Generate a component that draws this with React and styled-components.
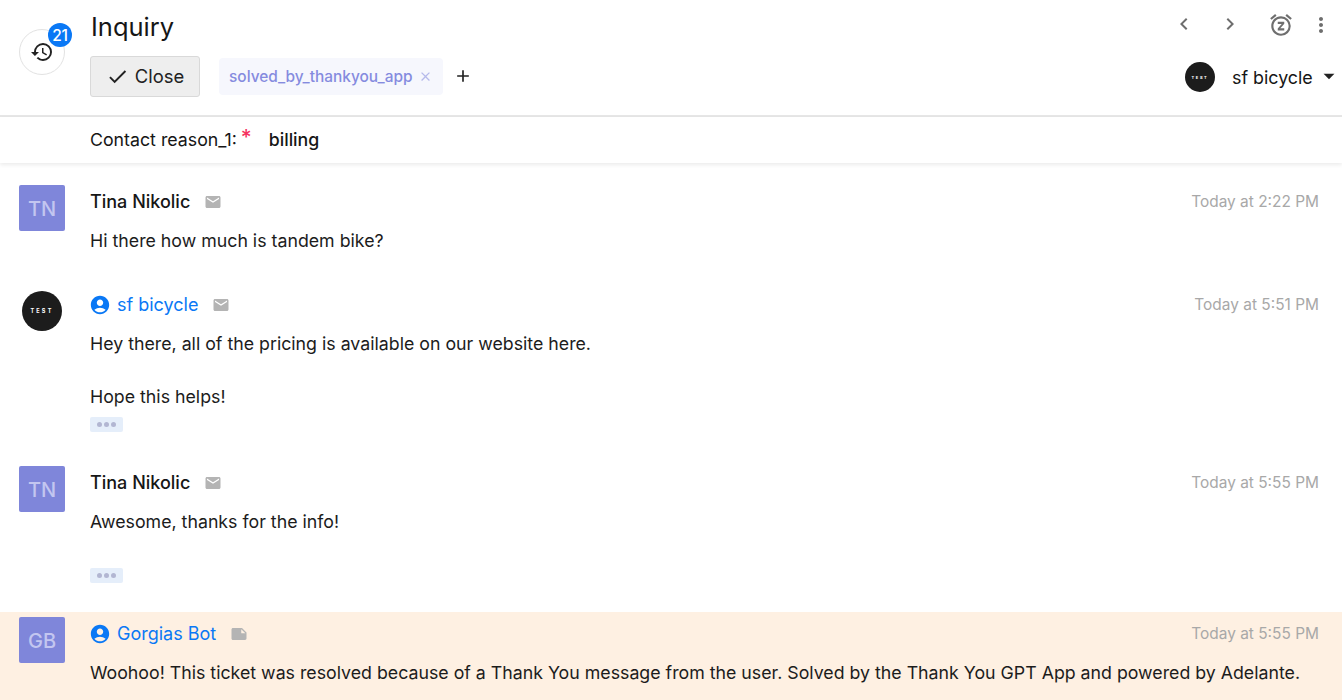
import React from 'react'
import styled, { createGlobalStyle } from 'styled-components'
import {
  MdHistory,
  MdCheck,
  MdClose,
  MdAdd,
  MdChevronLeft,
  MdChevronRight,
  MdSnooze,
  MdMoreVert,
  MdArrowDropDown,
  MdAccountCircle,
  MdEmail,
  MdNote,
} from 'react-icons/md'

const GlobalStyle = createGlobalStyle`
  html, body {
    margin: 0;
    height: 100%;
    overflow: hidden;
    background: #fff;
    font-family: Inter, "Liberation Sans", sans-serif;
    color: #161616;
  }
  * { box-sizing: border-box; }
`

const Header = styled.header`
  height: 117px;
  display: flex;
  padding: 0 0 0 19px;
  border-bottom: 2px solid #e6e6e6;
`

const HistoryCol = styled.div`
  width: 71px;
  flex: none;
  padding-top: 29px;
`

const HistoryBtn = styled.div`
  position: relative;
  width: 46px;
  height: 46px;
  border: 1px solid #e2e2e2;
  border-radius: 50%;
  display: flex;
  align-items: center;
  justify-content: center;
  font-size: 24px;
  color: #222;
`

const Badge = styled.span`
  position: absolute;
  top: -7px;
  right: -8px;
  width: 24px;
  height: 24px;
  border-radius: 50%;
  background: #0a78f5;
  color: #fff;
  font-size: 15.5px;
  font-weight: 500;
  letter-spacing: -0.3px;
  display: flex;
  align-items: center;
  justify-content: center;
`

const HeadMain = styled.div`
  flex: 1;
  min-width: 0;
`

const Title = styled.h1`
  margin: 0;
  padding: 11px 0 0 1px;
  height: 55px;
  font-size: 25.5px;
  line-height: 32px;
  font-weight: 400;
  color: #161616;
`

const ActionRow = styled.div`
  display: flex;
  align-items: center;
  height: 42px;
`

const CloseBtn = styled.button`
  width: 110px;
  height: 41px;
  margin: 0 19px 0 0;
  padding: 0;
  display: flex;
  align-items: center;
  justify-content: center;
  gap: 6px;
  background: #eeeeee;
  border: 1px solid #d9d9d9;
  border-radius: 3px;
  font: 400 18.4px Inter, "Liberation Sans", sans-serif;
  color: #222;
  svg { font-size: 23px; }
`

const Tag = styled.span`
  height: 37px;
  padding: 0 10px;
  display: flex;
  align-items: center;
  gap: 5px;
  background: #f6f7fd;
  border-radius: 4px;
  font-size: 15.45px;
  font-weight: 500;
  color: #858bdf;
  svg { font-size: 15px; color: #b6baeb; }
`

const AddTag = styled.span`
  margin-left: 10px;
  display: flex;
  font-size: 20px;
  color: #222;
`

const HeadRight = styled.div`
  width: 181px;
  flex: none;
`

const IconBar = styled.div`
  height: 55px;
  padding-top: 12px;
  display: flex;
  align-items: flex-start;
  color: #6e6e6e;
`

const IconSlot = styled.span`
  width: ${p => p.$w}px;
  display: flex;
  justify-content: center;
  font-size: ${p => p.$size || 26}px;
  line-height: 0;
`

const Owner = styled.div`
  height: 42px;
  padding: 2px 0 0 24px;
  display: flex;
  align-items: center;
  font-size: 17.85px;
  white-space: nowrap;
`

const OwnerName = styled.span`
  margin-left: 17px;
`

const Caret = styled.span`
  display: flex;
  margin-left: 3px;
  font-size: 26px;
  color: #222;
  position: relative;
  top: -1px;
`

const LogoCircle = styled.div`
  width: ${p => p.$size}px;
  height: ${p => p.$size}px;
  flex: none;
  border-radius: 50%;
  background: #1c1c1c;
  color: #fff;
  font-size: ${p => p.$font}px;
  font-weight: 700;
  letter-spacing: ${p => p.$font * 0.4}px;
  display: flex;
  align-items: center;
  justify-content: center;
`

const FieldBar = styled.div`
  height: 46px;
  padding: 0 0 2px 90px;
  display: flex;
  align-items: center;
  font-size: 17.75px;
  box-shadow: 0 2px 4px rgba(0, 0, 0, 0.08);
  position: relative;
`

const Required = styled.span`
  color: #f5335f;
  font-size: 21px;
  font-weight: 500;
  margin: -4px 0 0 4px;
`

const FieldValue = styled.span`
  margin-left: 17px;
  font-weight: 500;
`

const Thread = styled.main`
  display: flex;
  flex-direction: column;
`

const Message = styled.article`
  height: ${p => p.$h}px;
  display: flex;
  padding: ${p => p.$top ?? 22}px 23px 0 19px;
  background: ${p => (p.$note ? '#fef0e2' : 'transparent')};
`

const AvatarCol = styled.div`
  width: 71px;
  flex: none;
`

const Avatar = styled.div`
  width: 46px;
  height: 46px;
  padding-top: 2px;
  border-radius: 2px;
  background: #7f86da;
  color: #c3c6f0;
  font-size: 20px;
  font-weight: 500;
  display: flex;
  align-items: center;
  justify-content: center;
`

const RoundLogo = styled.div`
  padding: 3px 0 0 3px;
`

const Body = styled.div`
  flex: 1;
  min-width: 0;
`

const MsgHead = styled.div`
  height: 33px;
  display: flex;
  align-items: center;
`

const Name = styled.span`
  display: flex;
  align-items: center;
  gap: 6px;
  font-size: 18px;
  font-weight: ${p => (p.$agent ? 400 : 500)};
  color: ${p => (p.$agent ? '#0a78f5' : '#161616')};
  svg { font-size: 22px; margin-left: -1px; }
`

const Channel = styled.span`
  display: flex;
  margin-left: 14px;
  font-size: 18px;
  color: #b4b4b4;
`

const Time = styled.time`
  margin-left: auto;
  font-size: 15.45px;
  color: #a8a8a8;
`

const Text = styled.p`
  margin: 0;
  font-size: 17.75px;
  line-height: 27px;
  padding-top: 9px;
  color: #1c1c1c;
`

const Para = styled.p`
  margin: 0 0 26px;
  &:last-child { margin: 0; }
`

const More = styled.div`
  width: 33px;
  height: 15px;
  margin-top: ${p => p.$mt}px;
  background: #e5eefa;
  border-radius: 2px;
  display: flex;
  align-items: center;
  justify-content: center;
  gap: 2px;
`

const Dot = styled.i`
  width: 5px;
  height: 5px;
  border-radius: 50%;
  background: #b2b6d2;
`

function Dots({ mt }) {
  return (
    <More $mt={mt}>
      <Dot />
      <Dot />
      <Dot />
    </More>
  )
}

function Head({ name, agent, note, time }) {
  return (
    <MsgHead>
      <Name $agent={agent}>
        {agent && <MdAccountCircle />}
        {name}
      </Name>
      <Channel>{note ? <MdNote /> : <MdEmail />}</Channel>
      <Time>{time}</Time>
    </MsgHead>
  )
}

export default function App() {
  return (
    <>
      <GlobalStyle />
      <Header>
        <HistoryCol>
          <HistoryBtn>
            <MdHistory />
            <Badge>21</Badge>
          </HistoryBtn>
        </HistoryCol>
        <HeadMain>
          <Title>Inquiry</Title>
          <ActionRow>
            <CloseBtn>
              <MdCheck />
              Close
            </CloseBtn>
            <Tag>
              solved_by_thankyou_app
              <MdClose />
            </Tag>
            <AddTag>
              <MdAdd />
            </AddTag>
          </ActionRow>
        </HeadMain>
        <HeadRight>
          <IconBar>
            <IconSlot $w={46} $size={24}><MdChevronLeft /></IconSlot>
            <IconSlot $w={46} $size={24}><MdChevronRight /></IconSlot>
            <IconSlot $w={56} $size={26}><MdSnooze /></IconSlot>
            <IconSlot $w={24} $size={26}><MdMoreVert /></IconSlot>
          </IconBar>
          <Owner>
            <LogoCircle $size={30} $font={4}>TEST</LogoCircle>
            <OwnerName>sf bicycle</OwnerName>
            <Caret><MdArrowDropDown /></Caret>
          </Owner>
        </HeadRight>
      </Header>
      <FieldBar>
        Contact reason_1:
        <Required>*</Required>
        <FieldValue>billing</FieldValue>
      </FieldBar>
      <Thread>
        <Message $h={103}>
          <AvatarCol><Avatar>TN</Avatar></AvatarCol>
          <Body>
            <Head name="Tina Nikolic" time="Today at 2:22 PM" />
            <Text>Hi there how much is tandem bike?</Text>
          </Body>
        </Message>
        <Message $h={178}>
          <AvatarCol>
            <RoundLogo><LogoCircle $size={40} $font={5.5}>TEST</LogoCircle></RoundLogo>
          </AvatarCol>
          <Body>
            <Head name="sf bicycle" agent time="Today at 5:51 PM" />
            <Text as="div">
              <Para>Hey there, all of the pricing is available on our website here.</Para>
              <Para>Hope this helps!</Para>
            </Text>
            <Dots mt={7} />
          </Body>
        </Message>
        <Message $h={168}>
          <AvatarCol><Avatar>TN</Avatar></AvatarCol>
          <Body>
            <Head name="Tina Nikolic" time="Today at 5:55 PM" />
            <Text>Awesome, thanks for the info!</Text>
            <Dots mt={33} />
          </Body>
        </Message>
        <Message $h={90} $note $top={5}>
          <AvatarCol><Avatar>GB</Avatar></AvatarCol>
          <Body>
            <Head name="Gorgias Bot" agent note time="Today at 5:55 PM" />
            <Text>Woohoo! This ticket was resolved because of a Thank You message from the user. Solved by the Thank You GPT App and powered by Adelante.</Text>
          </Body>
        </Message>
      </Thread>
    </>
  )
}
